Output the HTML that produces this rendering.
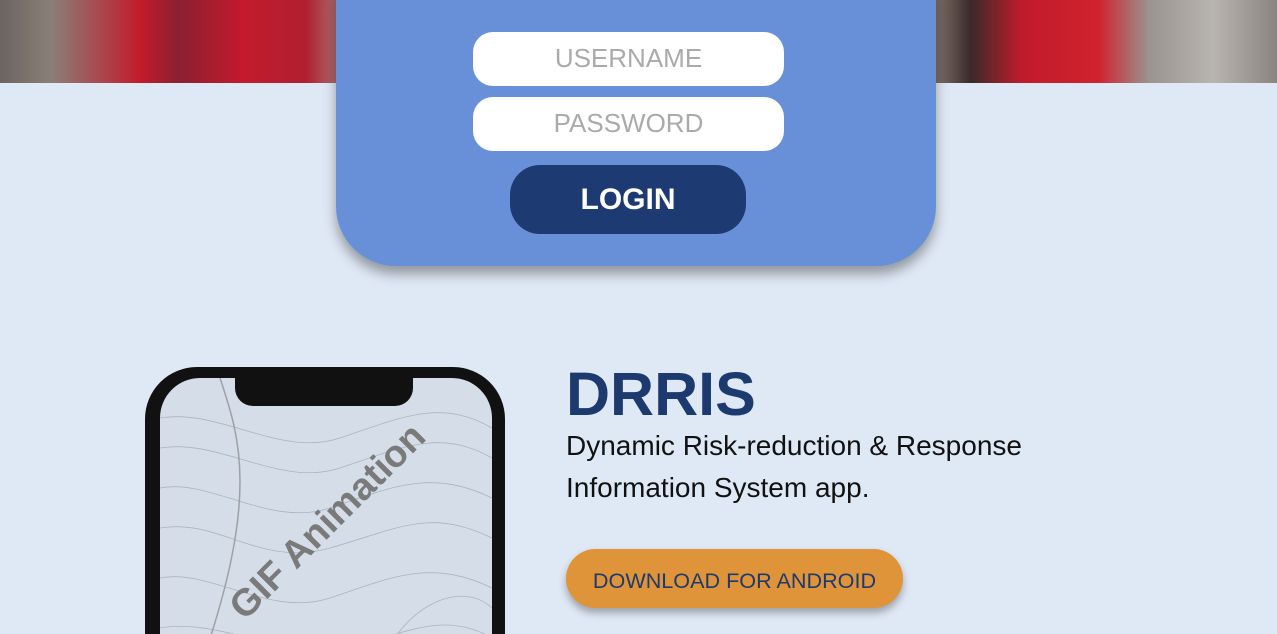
<!DOCTYPE html>
<html style="width:1277px;height:634px;overflow:hidden"><head><style>
body{margin:0;width:1277px;height:634px;overflow:hidden;background:#dfe8f5;font-family:"Liberation Sans",Arial,sans-serif;position:relative}
.hdr{position:absolute;left:0;top:0;width:1277px;height:83px;background:linear-gradient(90deg,#6b6460 0,#8a7f78 4%,#c21b2c 11%,#8a2030 14%,#c31a2c 19%,#b02030 24%,#a89c94 28%,#a0928a 72%,#3a2a2a 76%,#c01b2b 80%,#d0222e 86%,#9a9490 90%,#b8b4b0 95%,#8a8480 100%)}
.panel{position:absolute;left:336px;top:-60px;width:600px;height:326px;background:#6890d8;border-radius:60px;box-shadow:0 8px 12px rgba(0,0,0,.35)}
.inp{position:absolute;left:473px;width:311px;height:54px;background:#fff;border-radius:20px;color:#aaa;font-size:26px;text-align:center;line-height:52px}
.login{position:absolute;left:510px;top:165px;width:236px;height:69px;background:#1d3a72;border-radius:30px;color:#fff;font-weight:bold;font-size:30px;text-align:center;line-height:70px}
h1{position:absolute;left:566px;top:359px;margin:0;font-size:61px;color:#1d3a6e;font-weight:bold}
.desc{position:absolute;left:566px;top:425px;font-size:28px;line-height:42px;color:#111}
.btn{position:absolute;left:566px;top:549px;width:337px;height:59px;background:#e0943a;border-radius:30px;color:#1d3a6e;font-size:21.6px;text-align:center;line-height:63px;box-shadow:0 5px 8px rgba(0,0,0,.3)}
.phone{position:absolute;left:145px;top:367px;width:360px;height:267px;background:#111;border-radius:52px 52px 0 0}
.screen{position:absolute;left:160px;top:378px;width:332px;height:256px;background:#d4dde8;border-radius:40px 40px 0 0;overflow:hidden}
.notch{position:absolute;left:235px;top:376px;width:178px;height:30px;background:#111;border-radius:0 0 18px 18px}
</style></head><body>
<div class="hdr"></div>
<div class="panel"></div>
<div class="inp" style="top:32px">USERNAME</div>
<div class="inp" style="top:97px">PASSWORD</div>
<div class="login">LOGIN</div>
<div class="phone"></div>
<div class="screen">
<svg width="332" height="256" fill="none" stroke="#9aa4ae" stroke-width="0.8" style="position:absolute;left:0;top:0;display:block">
<g opacity=".7">
<path d="M0 40 C60 30 120 80 180 60 S280 20 332 50"/><path d="M0 70 C60 60 120 110 180 90 S280 50 332 80"/><path d="M0 110 C50 100 110 150 170 130 S270 90 332 120"/><path d="M0 150 C60 140 100 190 170 170 S270 130 332 160"/><path d="M0 200 C50 190 110 240 170 220 S270 180 332 210"/><path d="M0 250 C60 240 120 280 180 270 S280 230 332 260"/><path d="M60 0 C80 60 100 120 40 290" stroke="#888" stroke-width="1.5"/><path d="M220 290 C240 230 300 200 332 230"/>
</g>
<text x="167" y="156" transform="rotate(-45 167 143)" text-anchor="middle" font-family="Liberation Sans, Arial, sans-serif" font-size="38" font-weight="bold" fill="#7a7a7a" stroke="none">GIF Animation</text>
</svg>
</div>
<div class="notch"></div>
<h1>DRRIS</h1>
<div class="desc">Dynamic Risk-reduction &amp; Response<br>Information System app.</div>
<div class="btn">DOWNLOAD FOR ANDROID</div>
</body></html>
